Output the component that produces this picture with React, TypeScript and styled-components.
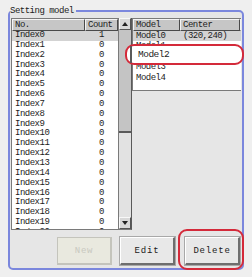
import styled, { createGlobalStyle } from "styled-components";

const GlobalStyle = createGlobalStyle`
  html, body {
    margin: 0;
    padding: 0;
    background: #efefef;
  }
  body {
    width: 252px;
    height: 277px;
    overflow: hidden;
    font-family: "Liberation Mono", "DejaVu Sans Mono", monospace;
    font-size: 9px;
    color: #1c1c1c;
  }
`;

const Page = styled.div`
  padding: 6px 8px 7px 8px;
  height: 277px;
  box-sizing: border-box;
`;

const Frame = styled.fieldset`
  position: relative;
  margin: 0;
  height: 100%;
  box-sizing: border-box;
  border: 2px solid #7b87dd;
  border-radius: 5px;
  background: #e6e6e6;
  padding: 0 1px 0 1px;
  display: flex;
  flex-direction: column;
`;

const Legend = styled.legend`
  padding: 0 2px 0 0;
  margin-left: -1px;
  letter-spacing: -0.5px;
  line-height: 10px;
  color: #222;
`;

const ListsRow = styled.div`
  display: flex;
  height: 212px;
  margin-top: 2px;
`;

const ListBox = styled.div<{ $width: number; $height?: number }>`
  width: ${(p) => p.$width}px;
  height: ${(p) => (p.$height ? `${p.$height}px` : "100%")};
  background: #ffffff;
  border: 1px solid #7a7a7a;
  border-right: none;
  box-sizing: border-box;
  overflow: hidden;
  display: flex;
  flex-direction: column;
`;

const HeaderRow = styled.div<{ $cols: string }>`
  display: grid;
  grid-template-columns: ${(p) => p.$cols};
  height: 12px;
  flex: none;
`;

const HeaderCell = styled.div`
  background: #c6c6c6;
  border-right: 1px solid #4a4a4a;
  border-bottom: 1px solid #4a4a4a;
  border-top: 1px solid #f4f4f4;
  border-left: 1px solid #f4f4f4;
  box-sizing: border-box;
  padding-left: 2px;
  line-height: 10px;
  letter-spacing: -0.5px;
  white-space: nowrap;
  overflow: hidden;
`;

const Row = styled.div<{ $cols: string; $h: number; $selected?: boolean }>`
  display: grid;
  grid-template-columns: ${(p) => p.$cols};
  height: ${(p) => p.$h}px;
  line-height: ${(p) => p.$h}px;
  flex: none;
  background: ${(p) => (p.$selected ? "#d3d3d3" : "transparent")};
  letter-spacing: -0.5px;
  white-space: nowrap;
`;

const Cell = styled.div<{ $center?: boolean }>`
  padding-left: ${(p) => (p.$center ? "0" : "3px")};
  text-align: ${(p) => (p.$center ? "center" : "left")};
  overflow: hidden;
`;

const ScrollBar = styled.div`
  width: 14px;
  height: 100%;
  box-sizing: border-box;
  border-right: 1px solid #5a5a5a;
  border-left: 1px solid #7a7a7a;
  border-bottom: 1px solid #7a7a7a;
  background: #e2e2e2;
  display: flex;
  flex-direction: column;
`;

const ArrowButton = styled.div`
  height: 12px;
  flex: none;
  background: #d8d8d8;
  border-top: 1px solid #f8f8f8;
  border-left: 1px solid #f8f8f8;
  border-right: 1px solid #555;
  border-bottom: 1px solid #555;
  box-sizing: border-box;
  display: flex;
  align-items: center;
  justify-content: center;
`;

const Arrow = styled.div<{ $down?: boolean }>`
  width: 0;
  height: 0;
  border-left: 3px solid transparent;
  border-right: 3px solid transparent;
  ${(p) =>
    p.$down ? "border-top: 4px solid #222;" : "border-bottom: 4px solid #222;"}
`;

const Track = styled.div`
  flex: 1;
  display: flex;
  flex-direction: column;
`;

const Thumb = styled.div`
  height: 103px;
  background: #c4c4c4;
  border-bottom: 2px solid #5a5a5a;
  box-sizing: border-box;
`;

const RightPane = styled.div`
  flex: 1;
`;

const ButtonRow = styled.div`
  display: flex;
  justify-content: flex-end;
  gap: 8px;
  padding: 7px 1px 0 0;
`;

const Button = styled.div<{ $disabled?: boolean; $gap?: number }>`
  width: 55px;
  height: 28px;
  margin-left: ${(p) => p.$gap ?? 0}px;
  box-sizing: border-box;
  display: flex;
  align-items: center;
  justify-content: center;
  letter-spacing: 0.8px;
  background: ${(p) => (p.$disabled ? "#e9e9df" : "#e8e8e8")};
  color: ${(p) => (p.$disabled ? "#c8c8c0" : "#202020")};
  border-top: 1px solid ${(p) => (p.$disabled ? "#c4c4bc" : "#ffffff")};
  border-left: 1px solid ${(p) => (p.$disabled ? "#c4c4bc" : "#ffffff")};
  border-right: 2px solid ${(p) => (p.$disabled ? "#c4c4bc" : "#6e6e6e")};
  border-bottom: 2px solid ${(p) => (p.$disabled ? "#c4c4bc" : "#6e6e6e")};
  outline: 1px solid ${(p) => (p.$disabled ? "transparent" : "#a8a8a8")};
`;

const Callout = styled.div<{ $x: number; $y: number; $w: number; $h: number; $fill?: boolean }>`
  position: absolute;
  left: ${(p) => p.$x}px;
  top: ${(p) => p.$y}px;
  width: ${(p) => p.$w}px;
  height: ${(p) => p.$h}px;
  box-sizing: border-box;
  border: 2px solid #d42a3a;
  border-radius: 9px;
  background: ${(p) => (p.$fill ? "#ffffff" : "transparent")};
  display: flex;
  align-items: center;
  letter-spacing: -0.5px;
`;

const CalloutEdge = styled.div`
  width: 2px;
  height: 100%;
  margin-left: 3px;
  background: #5a5a5a;
`;

const CalloutText = styled.span`
  margin-left: 6px;
  font-size: 9.5px;
`;

const leftCols = "73px 1fr";
const rightCols = "47px 60px 1fr";

const indexRows = Array.from({ length: 21 }, (_, i) => ({
  name: `Index${i}`,
  count: i === 0 ? 1 : 0,
}));

const models = [
  { name: "Model0", center: "(320,240)" },
  { name: "Model1", center: "" },
  { name: "Model2", center: "" },
  { name: "Model3", center: "" },
  { name: "Model4", center: "" },
];

export default function App() {
  return (
    <>
      <GlobalStyle />
      <Page>
        <Frame>
          <Legend>Setting model</Legend>
          <ListsRow>
            <ListBox $width={107}>
              <HeaderRow $cols={leftCols}>
                <HeaderCell>No.</HeaderCell>
                <HeaderCell>Count</HeaderCell>
              </HeaderRow>
              {indexRows.map((r, i) => (
                <Row key={r.name} $cols={leftCols} $h={9.85} $selected={i === 0}>
                  <Cell>{r.name}</Cell>
                  <Cell $center>{r.count}</Cell>
                </Row>
              ))}
            </ListBox>
            <ScrollBar>
              <ArrowButton>
                <Arrow />
              </ArrowButton>
              <Track>
                <Thumb />
              </Track>
              <ArrowButton>
                <Arrow $down />
              </ArrowButton>
            </ScrollBar>
            <RightPane>
              <ListBox $width={109} $height={73}>
                <HeaderRow $cols={rightCols}>
                  <HeaderCell>Model</HeaderCell>
                  <HeaderCell>Center</HeaderCell>
                  <HeaderCell />
                </HeaderRow>
                {models.map((m, i) => (
                  <Row key={m.name} $cols={rightCols} $h={10.4} $selected={i === 0}>
                    <Cell>{m.name}</Cell>
                    <Cell>{m.center}</Cell>
                    <Cell />
                  </Row>
                ))}
              </ListBox>
            </RightPane>
          </ListsRow>
          <ButtonRow>
            <Button $disabled>New</Button>
            <Button>Edit</Button>
            <Button $gap={2}>Delete</Button>
          </ButtonRow>
          <Callout $x={115} $y={28} $w={119} $h={21} $fill>
            <CalloutEdge />
            <CalloutText>Model2</CalloutText>
          </Callout>
          <Callout $x={168} $y={213} $w={66} $h={41} />
        </Frame>
      </Page>
    </>
  );
}
